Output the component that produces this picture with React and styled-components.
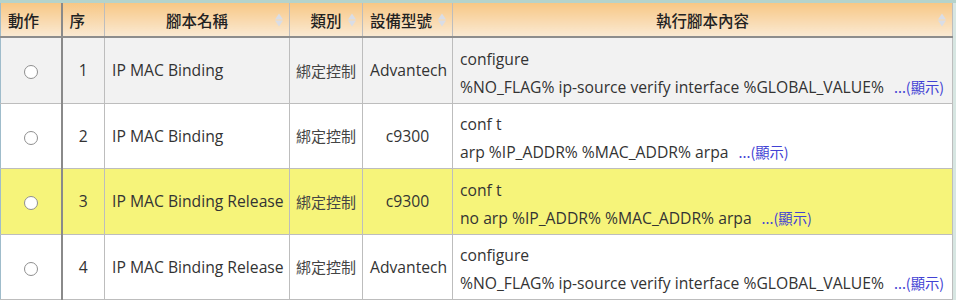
import React from "react";
import styled, { createGlobalStyle } from "styled-components";

const GlobalStyle = createGlobalStyle`
  html, body {
    margin: 0;
    padding: 0;
    background: #ffffff;
  }
  body {
    font-family: "Open Sans", "Noto Sans CJK TC", sans-serif;
    color: #333;
  }
`;

const Frame = styled.div`
  width: 956px;
  height: 300px;
  overflow: hidden;
  background: #d7e6e2;
  border-top: 3px solid #b5d3cb;
  box-sizing: border-box;
`;

const Table = styled.table`
  width: 953px;
  border-collapse: collapse;
  table-layout: fixed;
  background: #fff;
  border-left: 1px solid #9fbccb;
`;

const HeadCell = styled.th`
  position: relative;
  height: 33px;
  padding: 0 7px;
  font-family: "Noto Sans CJK TC", sans-serif;
  font-weight: 500;
  font-size: 15.5px;
  color: #222;
  text-align: ${({ align }) => align || "center"};
  background: linear-gradient(#f7c785, #fae9d2);
  border-right: ${({ strong }) => (strong ? "2px solid #8a8a8a" : "1px solid #bdbdbd")};
  border-bottom: 2px solid #8d8d8d;
`;

const SortMark = styled.span`
  position: absolute;
  right: 6px;
  top: 50%;
  transform: translateY(-50%);
  display: flex;
  flex-direction: column;
  gap: 1px;
  &::before,
  &::after {
    content: "";
    display: block;
    border-left: 4px solid transparent;
    border-right: 4px solid transparent;
  }
  &::before {
    border-bottom: 6px solid #d9dde6;
  }
  &::after {
    border-top: 6px solid #d9dde6;
  }
`;

const Row = styled.tr`
  background: ${({ tone }) =>
    tone === "grey" ? "#f2f2f2" : tone === "yellow" ? "#f6f47a" : "#ffffff"};
`;

const Cell = styled.td`
  height: 64.5px;
  padding: 0 7px;
  font-size: 15.7px;
  color: #333;
  text-align: ${({ align }) => align || "left"};
  white-space: nowrap;
  border-right: ${({ strong }) => (strong ? "2px solid #8a8a8a" : "1px solid #bdbdbd")};
  border-bottom: 1px solid #bdbdbd;
`;

const CatCell = styled(Cell)`
  font-family: "Noto Sans CJK TC", sans-serif;
  font-size: 15px;
  color: #444;
  padding: 0 4px;
`;

const ScriptCell = styled(Cell)`
  height: 58.5px;
  padding-top: 6px;
`;

const Radio = styled.span`
  display: inline-block;
  width: 12px;
  height: 12px;
  border-radius: 50%;
  border: 1px solid #8f8f8f;
  background: #fff;
  vertical-align: middle;
`;

const ScriptLine = styled.div`
  line-height: 27px;
`;

const ShowLink = styled.a`
  margin-left: 10px;
  font-family: "Noto Sans CJK TC", sans-serif;
  font-size: 14.3px;
  color: #4242d4;
  text-decoration: none;
`;

const rows = [
  {
    no: 1,
    name: "IP MAC Binding",
    model: "Advantech",
    lines: ["configure", "%NO_FLAG% ip-source verify interface %GLOBAL_VALUE%"],
    tone: "grey",
  },
  {
    no: 2,
    name: "IP MAC Binding",
    model: "c9300",
    lines: ["conf t", "arp %IP_ADDR% %MAC_ADDR% arpa"],
    tone: "white",
  },
  {
    no: 3,
    name: "IP MAC Binding Release",
    model: "c9300",
    lines: ["conf t", "no arp %IP_ADDR% %MAC_ADDR% arpa"],
    tone: "yellow",
  },
  {
    no: 4,
    name: "IP MAC Binding Release",
    model: "Advantech",
    lines: ["configure", "%NO_FLAG% ip-source verify interface %GLOBAL_VALUE%"],
    tone: "white",
  },
];

export default function App() {
  return (
    <>
      <GlobalStyle />
      <Frame>
        <Table>
          <colgroup>
            <col style={{ width: 61 }} />
            <col style={{ width: 43 }} />
            <col style={{ width: 185 }} />
            <col style={{ width: 73 }} />
            <col style={{ width: 90 }} />
            <col />
          </colgroup>
          <thead>
            <tr>
              <HeadCell align="left" strong>動作</HeadCell>
              <HeadCell align="left">序</HeadCell>
              <HeadCell>腳本名稱<SortMark /></HeadCell>
              <HeadCell>類別<SortMark /></HeadCell>
              <HeadCell align="left">設備型號<SortMark /></HeadCell>
              <HeadCell>執行腳本內容<SortMark /></HeadCell>
            </tr>
          </thead>
          <tbody>
            {rows.map((r) => (
              <Row key={r.no} tone={r.tone}>
                <Cell align="center" strong>
                  <Radio />
                </Cell>
                <Cell align="center">{r.no}</Cell>
                <Cell>{r.name}</Cell>
                <CatCell align="center">綁定控制</CatCell>
                <Cell align="center">{r.model}</Cell>
                <ScriptCell>
                  <ScriptLine>{r.lines[0]}</ScriptLine>
                  <ScriptLine>
                    {r.lines[1]}
                    <ShowLink href="#">...(顯示)</ShowLink>
                  </ScriptLine>
                </ScriptCell>
              </Row>
            ))}
          </tbody>
        </Table>
      </Frame>
    </>
  );
}
